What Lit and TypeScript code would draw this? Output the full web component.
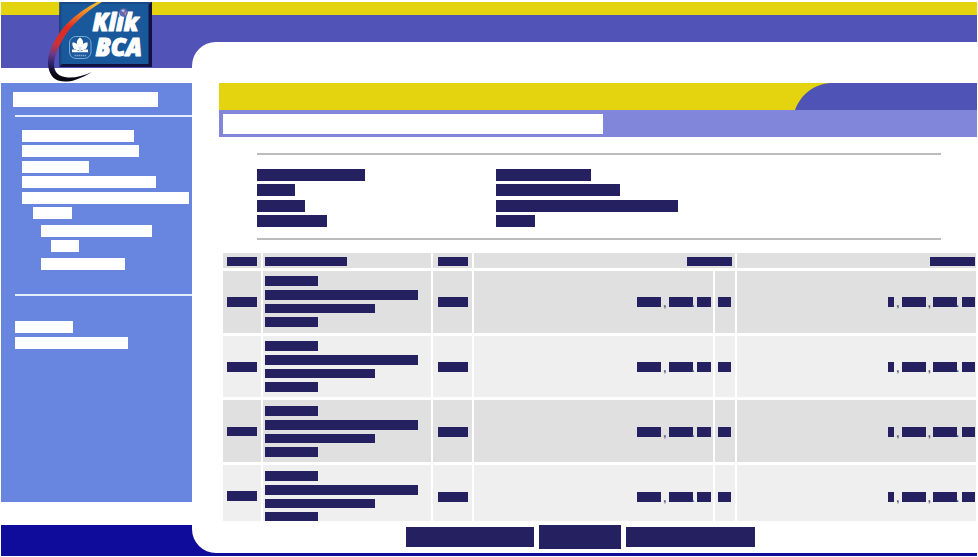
import { LitElement, html, css, svg } from "lit";
import { customElement, property } from "lit/decorators.js";
import { styleMap } from "lit/directives/style-map.js";

const px = (n: number) => `${n}px`;

/** Solid strip standing in for a masked piece of text. */
const bar = (width: number, height: number, top = 0, left = 0) =>
  html`<div
    class="bar"
    style=${styleMap({ width: px(width), height: px(height), marginTop: px(top), marginLeft: px(left) })}
  ></div>`;

@customElement("klik-logo")
class KlikLogo extends LitElement {
  static styles = css`
    :host { display: block; }
    svg { display: block; }
    .word {
      font-family: "Open Sans", "Noto Sans", sans-serif;
      font-weight: 800;
      font-style: italic;
      fill: #fff;
      stroke: #fff;
      stroke-width: 1.1px;
      stroke-linejoin: round;
    }
  `;
  render() {
    return html`<svg width="108" height="84" viewBox="46 0 108 84">
      ${svg`
      <defs>
        <linearGradient id="swoosh" gradientUnits="userSpaceOnUse" x1="70" y1="2" x2="60" y2="80">
          <stop offset="0" stop-color="#f7b52a"/>
          <stop offset=".18" stop-color="#ec6a24"/>
          <stop offset=".32" stop-color="#e02a20"/>
          <stop offset=".55" stop-color="#cf3037"/>
          <stop offset=".68" stop-color="#6e3a86"/>
          <stop offset=".8" stop-color="#2f2670"/>
          <stop offset=".9" stop-color="#140c28"/>
          <stop offset="1" stop-color="#050308"/>
        </linearGradient>
      </defs>
      <rect x="59.5" y="2" width="92.5" height="65" fill="#12113f"/>
      <path d="M59.5 2H152L148.500 4.500H62V64L59.500 67Z" fill="#174a86"/>
      <rect x="61.500" y="4" width="87" height="60" fill="#19599b"/>
      <path d="M97 2C82 10 72 18 64 27C55 38 49 50 48 60C47.500 70 51 78 58 80.500C64 82.500 70 81.500 75 80C81 78 87 75 92 72C84 75.500 75 78 68 77.500C59 77 54 72 54 65C54 56 60 42 69 30C78 19 90 9 102 2Z" fill="url(#swoosh)"/>
      <rect x="69.500" y="36.500" width="21.500" height="22" rx="6.500" fill="#1c599b" stroke="#87b2dc" stroke-width=".9"/>
      <g fill="#fff">
        <path d="M80 37.500C83.500 40 84 43 82 47H78C76 43 76.500 40 80 37.500Z"/>
        <path d="M79.300 50C75 51 71.500 47.500 72.500 42.500C76.500 42.500 79 45 79.300 50Z"/>
        <path d="M80.700 50C85 51 88.500 47.500 87.500 42.500C83.500 42.500 81 45 80.700 50Z"/>
        <path d="M79.200 46H80.800V52H79.200Z"/>
        <path d="M72 49.500C75 49.500 78 50 80 52C82 50 85 49.500 88 49.500V52.300H72Z"/>
      </g>
      <path d="M74.500 55.500H86" stroke="#7fa9d3" stroke-width="1.600" stroke-dasharray="1.500 .6"/>
      <text class="word"><tspan x="92.500" y="31.300" font-size="25.500" textLength="46" lengthAdjust="spacingAndGlyphs">Klik</tspan><tspan x="95.500" y="55.500" font-size="25" textLength="46.500" lengthAdjust="spacingAndGlyphs">BCA</tspan></text>
      <circle cx="123.500" cy="12.500" r="4.300" fill="#6466ad"/>
      <path d="M121 10.500Q123 8.500 125 10.500L123.500 12.500Z" fill="#b7bce2"/>
      <path d="M124 13L126.500 12L125.500 15.200Z" fill="#c68896"/>`}
    </svg>`;
  }
}

/** [width, gap above, indent] for each navigation entry. */
const MENU = [
  [112, 13, 7.3], [116.5, 3.8, 7.3], [67, 3.8, 7.3], [134, 3.6, 7.3], [166.3, 4.1, 7.3],
  [38.5, 3.6, 18.3], [111.7, 6, 25.5], [28, 3.7, 36.3], [84, 6.4, 25.5],
];

@customElement("side-menu")
class SideMenu extends LitElement {
  static styles = css`
    :host { display: block; background: #6886e0; padding: 9px 0 0 14px; box-sizing: border-box; }
    .bar { background: #fff; }
    .title { margin-left: -2px; }
    .rule { height: 2px; background: #e6edfc; margin-top: 8px; }
    .links { padding-bottom: 15.500px; }
  `;
  render() {
    return html`
      <div class="title">${bar(145, 15)}</div>
      <div class="rule"></div>
      <div class="links">${MENU.map(([w, gap, indent]) => bar(w, 11.7, gap, indent))}</div>
      <div class="rule"></div>
      ${bar(58, 12, 25)} ${bar(112.5, 12, 4)}
    `;
  }
}

@customElement("mutation-table")
class MutationTable extends LitElement {
  @property({ type: Number }) declare rows: number;
  constructor() {
    super();
    this.rows = 4;
  }
  static styles = css`
    :host { display: block; height: 268px; overflow: hidden; }
    .row { display: grid; grid-template-columns: 38px 168px 39px 239px 20px 239px; column-gap: 2px; height: 61.700px; margin-bottom: 3px; }
    .head { grid-template-columns: 38px 168px 39px 261px 239px; height: 15px; }
    .cell { background: #efefef; box-sizing: border-box; overflow: hidden; }
    .odd .cell, .head .cell { background: #e0e0e0; }
    .bar { background: #25205f; flex: none; }
    .amount { display: flex; justify-content: flex-end; padding-right: 2.500px; }
    .head .amount { padding-right: 3px; }
    .amount.last { padding-right: 1px; }
    .sep { width: 7.500px; flex: none; height: 12px; margin-top: 1px; text-align: center; color: #56536f; font: 700 11px/11px "Liberation Sans", sans-serif; }
    .dot { width: 4.500px; text-align: left; text-indent: -1px; }
  `;
  row(i: number) {
    const drift = i * 0.3;
    const mid = 26.3 + drift;
    const sep = (t: string) =>
      html`<div style=${styleMap({ paddingTop: px(mid) })}><div class="sep ${t === "." ? "dot" : ""}">${t}</div></div>`;
    return html`<div class="row ${i % 2 ? "" : "odd"}">
      <div class="cell">${bar(30, 9.7, 26.3, 3.7)}</div>
      <div class="cell">
        ${bar(52.7, 9.7, 5.4 + drift, 2.4)} ${bar(152.4, 9.7, 4, 2.4)} ${bar(110, 9.7, 4, 2.4)}
        ${bar(52.7, 9.7, 4, 2.4)}
      </div>
      <div class="cell">${bar(30.5, 9.7, mid, 4.5)}</div>
      <div class="cell amount">
        ${bar(24, 9.7, mid)}${sep(",")}${bar(24, 9.7, mid)}${sep(".")}${bar(13.5, 9.7, mid)}
      </div>
      <div class="cell">${bar(13.5, 9.7, mid, 2.5)}</div>
      <div class="cell amount last">
        ${bar(6.5, 9.7, mid)}${sep(",")}${bar(24, 9.7, mid)}${sep(",")}${bar(24, 9.7, mid)}${sep(".")}${bar(13.5, 9.7, mid)}
      </div>
    </div>`;
  }
  render() {
    return html`
      <div class="row head">
        <div class="cell">${bar(30, 9.5, 3.5, 3.7)}</div>
        <div class="cell">${bar(81.5, 9.5, 3.5, 2.4)}</div>
        <div class="cell">${bar(30.5, 9.5, 3.5, 4.5)}</div>
        <div class="cell amount">${bar(45.5, 9.5, 3.5)}</div>
        <div class="cell amount last">${bar(45.5, 9.5, 3.5)}</div>
      </div>
      ${Array.from({ length: this.rows }, (_, i) => this.row(i))}
    `;
  }
}

@customElement("app-root")
class AppRoot extends LitElement {
  static styles = css`
    :host { display: block; width: 978px; height: 557px; background: #fff; box-sizing: border-box; padding: 2px 1px 1px; overflow: hidden; font-family: "Liberation Sans", sans-serif; }
    .page { display: grid; grid-template-columns: 191px 785px; grid-template-rows: 13px 27px 26px 15px 419px 23px 28px 3px; }
    .gold { grid-area: 1 / 1 / 2 / 3; background: #e4d30f; }
    .violet { grid-area: 2 / 1 / 4 / 3; background: #5153b7; }
    .logo { grid-area: 1 / 1 / 6 / 2; z-index: 2; margin: -2px 0 0 45px; }
    side-menu { grid-area: 5 / 1 / 6 / 2; }
    .foot { grid-area: 7 / 1 / 9 / 3; background: #100c9b; }
    .panel { grid-area: 3 / 2 / 8 / 3; background: #fff; border-radius: 24px 0 0 24px; padding: 41px 0 0 27px; box-sizing: border-box; height: 511px; }
    .banner { display: block; }
    .caption { height: 27px; background: #8286db; padding: 4px 0 0 4px; box-sizing: border-box; }
    .caption .bar { background: #fff; }
    .bar { background: #25205f; }
    .info { margin: 16px 36px 13px 38px; padding: 14px 0 11px; border-top: 2px solid #bcbcbc; border-bottom: 2px solid #bcbcbc; display: grid; grid-template-columns: 238.500px 1fr; height: 58px; }
    .info .bar { margin-bottom: 3.700px; }
    mutation-table { margin-left: 4px; }
    .actions { display: flex; gap: 5.300px; align-items: center; margin: 4px 0 0 187px; }
  `;
  render() {
    return html`<div class="page">
      <div class="gold"></div>
      <div class="violet"></div>
      <klik-logo class="logo"></klik-logo>
      <side-menu></side-menu>
      <div class="foot"></div>
      <main class="panel">
        <svg class="banner" width="758" height="27" viewBox="0 0 758 27">
          <rect width="758" height="27" fill="#e4d30f" />
          <path d="M576 27C582 11 595 1 612 0H758V27Z" fill="#4e53b5" />
        </svg>
        <div class="caption">${bar(379.5, 20)}</div>
        <section class="info">
          <div>${[108.3, 38, 47.7, 69.7].map((w) => bar(w, 11.8))}</div>
          <div>${[95.3, 124, 182, 39].map((w) => bar(w, 11.8))}</div>
        </section>
        <mutation-table .rows=${4}></mutation-table>
        <div class="actions">${bar(128.2, 19.5)}${bar(81.5, 24)}${bar(128.3, 19.5)}</div>
      </main>
    </div>`;
  }
}
